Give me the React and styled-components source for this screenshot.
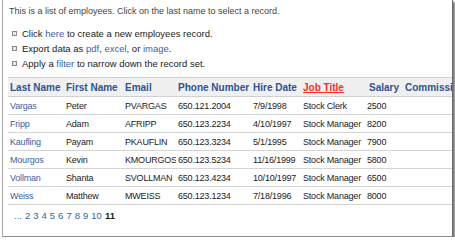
import styled, { createGlobalStyle } from 'styled-components';

const GlobalStyle = createGlobalStyle`
  body {
    margin: 0;
    background: #ffffff;
    font-family: "Liberation Sans", Arial, sans-serif;
  }
`;

// Cadre de la capture
const Frame = styled.div`
  width: 449px;
  height: 236px;
  margin-left: 2px;
  border-left: 1px solid #a8a8a8;
  border-right: 1px solid #6a6a6a;
  border-bottom: 1px solid #8a8a8a;
  box-shadow: 2px 2px 2px rgba(0, 0, 0, 0.55);
  overflow: hidden;
  background: #ffffff;
`;

const Intro = styled.p`
  margin: 0;
  padding: 5px 0 0 6px;
  font-size: 9px;
  color: #444444;
  line-height: 12px;
`;

const ActionList = styled.ul`
  list-style: none;
  margin: 9px 0 0 0;
  padding: 0 0 0 9px;
`;

const ActionItem = styled.li`
  display: flex;
  align-items: center;
  gap: 4px;
  height: 15px;
  font-size: 9.5px;
  color: #222222;
  white-space: pre;
`;

const Bullet = styled.span`
  width: 3px;
  height: 3px;
  border: 1px solid #8a8a8a;
  background: #e8e8e8;
  margin-right: 1px;
`;

const Link = styled.a`
  color: #3b5fa3;
  text-decoration: none;
`;

const Grid = styled.table`
  margin: 6px 0 0 5px;
  border-collapse: collapse;
  table-layout: fixed;
  width: 460px;
  font-size: 9px;
`;

const HeadRow = styled.tr`
  background: #f0f0f0;
  border-top: 1px solid #d0d0d0;
  border-bottom: 1px solid #d0d0d0;
  height: 19px;
`;

const Th = styled.th`
  text-align: left;
  font-weight: bold;
  font-size: 10px;
  padding: 0 0 0 ${(p) => p.$pad || 2}px;
  color: ${(p) => (p.$active ? '#ff2a2a' : '#2e5392')};
  text-decoration: ${(p) => (p.$active ? 'underline' : 'none')};
  white-space: nowrap;
  overflow: hidden;
`;

const Row = styled.tr`
  height: 18px;
  border-bottom: 1px solid #d4d4d4;
`;

const Td = styled.td`
  padding: 0 0 0 2px;
  color: #222222;
  letter-spacing: -0.2px;
  white-space: nowrap;
  overflow: hidden;
`;

const NameLink = styled.a`
  color: #3b5fa3;
  text-decoration: none;
`;

const Pager = styled.div`
  display: flex;
  gap: 3px;
  padding: 5px 0 0 11px;
  font-size: 9.5px;
`;

const PageLink = styled.a`
  color: ${(p) => (p.$current ? '#222222' : '#3b5fa3')};
  font-weight: ${(p) => (p.$current ? 'bold' : 'normal')};
  text-decoration: none;
`;

const columns = [
  { label: 'Last Name', width: 56 },
  { label: 'First Name', width: 59 },
  { label: 'Email', width: 53 },
  { label: 'Phone Number', width: 75 },
  { label: 'Hire Date', width: 50 },
  { label: 'Job Title', width: 64, active: true },
  { label: 'Salary', width: 38, pad: 4 },
  { label: 'Commission', width: 65 },
];

const employees = [
  ['Vargas', 'Peter', 'PVARGAS', '650.121.2004', '7/9/1998', 'Stock Clerk', '2500'],
  ['Fripp', 'Adam', 'AFRIPP', '650.123.2234', '4/10/1997', 'Stock Manager', '8200'],
  ['Kaufling', 'Payam', 'PKAUFLIN', '650.123.3234', '5/1/1995', 'Stock Manager', '7900'],
  ['Mourgos', 'Kevin', 'KMOURGOS', '650.123.5234', '11/16/1999', 'Stock Manager', '5800'],
  ['Vollman', 'Shanta', 'SVOLLMAN', '650.123.4234', '10/10/1997', 'Stock Manager', '6500'],
  ['Weiss', 'Matthew', 'MWEISS', '650.123.1234', '7/18/1996', 'Stock Manager', '8000'],
];

const pages = ['...', '2', '3', '4', '5', '6', '7', '8', '9', '10'];

export default function App() {
  return (
    <>
      <GlobalStyle />
      <Frame>
        <Intro>This is a list of employees. Click on the last name to select a record.</Intro>
        <ActionList>
          <ActionItem>
            <Bullet />
            <span>Click <Link href="#">here</Link> to create a new employees record.</span>
          </ActionItem>
          <ActionItem>
            <Bullet />
            <span>
              Export data as <Link href="#">pdf</Link>, <Link href="#">excel</Link>, or <Link href="#">image</Link>.
            </span>
          </ActionItem>
          <ActionItem>
            <Bullet />
            <span>Apply a <Link href="#">filter</Link> to narrow down the record set.</span>
          </ActionItem>
        </ActionList>
        <Grid>
          <colgroup>
            {columns.map((c) => (
              <col key={c.label} style={{ width: c.width }} />
            ))}
          </colgroup>
          <thead>
            <HeadRow>
              {columns.map((c) => (
                <Th key={c.label} $active={c.active} $pad={c.pad}>{c.label}</Th>
              ))}
            </HeadRow>
          </thead>
          <tbody>
            {employees.map((e) => (
              <Row key={e[2]}>
                <Td><NameLink href="#">{e[0]}</NameLink></Td>
                {e.slice(1).map((v, i) => (
                  <Td key={i}>{v}</Td>
                ))}
                <Td />
              </Row>
            ))}
          </tbody>
        </Grid>
        <Pager>
          {pages.map((p) => (
            <PageLink key={p} href="#">{p}</PageLink>
          ))}
          <PageLink $current>11</PageLink>
        </Pager>
      </Frame>
    </>
  );
}
